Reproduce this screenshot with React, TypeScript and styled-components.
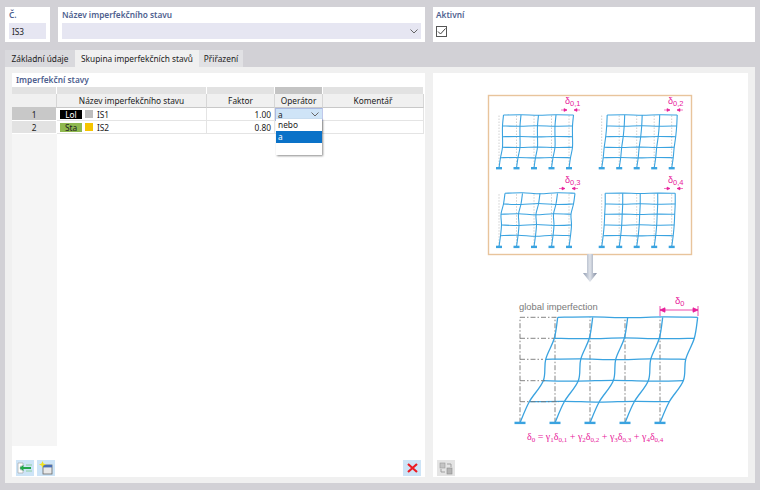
import React from "react";
import styled, { createGlobalStyle } from "styled-components";

const Global = createGlobalStyle`
  html, body { margin: 0; padding: 0; background: #d2d1d6; }
  body { font-family: "Noto Sans", "Liberation Sans", sans-serif; font-size: 8.3px; line-height: 11px; color: #222; }
`;

const Page = styled.div`
  width: 760px;
  height: 490px;
  box-sizing: border-box;
  padding: 7px 5px;
  display: flex;
  flex-direction: column;
  overflow: hidden;
`;

const TopRow = styled.div`
  display: flex;
  gap: 8px;
  height: 35px;
  margin-bottom: 8px;
`;

const Card = styled.div<{ $w?: number; $pad?: number }>`
  background: #fff;
  box-sizing: border-box;
  padding: 2px ${(p) => p.$pad ?? 4}px;
  width: ${(p) => (p.$w ? `${p.$w}px` : "auto")};
  flex: ${(p) => (p.$w ? "none" : "1")};
`;

const Label = styled.div`
  color: #4f5f8f;
  font-weight: 600;
  height: 14px;
  line-height: 11px;
`;

const Input = styled.div`
  height: 16px;
  background: #e6e6f2;
  display: flex;
  align-items: center;
  justify-content: space-between;
  padding: 0 3px 0 3px;
`;

const Checkbox = styled.div`
  width: 9px;
  height: 9px;
  border: 1px solid #555;
  margin-top: 3px;
  display: flex;
`;

const Tabs = styled.div`
  display: flex;
  height: 17px;
`;

const Tab = styled.div<{ $active?: boolean; $w: number; $bg?: string }>`
  width: ${(p) => p.$w}px;
  background: ${(p) => (p.$active ? "#f0f0f0" : p.$bg || "transparent")};
  display: flex;
  align-items: center;
  justify-content: center;
  color: #222;
`;

const Panel = styled.div`
  flex: 1;
  background: #f0f0f0;
  display: flex;
  gap: 8px;
  padding: 6px 7px 6px 7px;
  min-height: 0;
`;

const SidePane = styled.div<{ $w: number }>`
  width: ${(p) => p.$w}px;
  background: #fff;
  display: flex;
  flex-direction: column;
  position: relative;
`;

const Title = styled.div`
  height: 14px;
  line-height: 13px;
  padding-left: 4px;
  color: #4f5f8f;
  font-weight: 600;
`;

const COLS = "45px 150px 68px 48px 101px";

const Strip = styled.div`
  display: grid;
  grid-template-columns: ${COLS};
  height: 7px;
  & > div { background: #e2e2e2; margin-right: 1px; }
  & > div:nth-child(4) { background: #c4c4c4; }
`;

const HeadRow = styled.div`
  display: grid;
  grid-template-columns: ${COLS};
  height: 14px;
`;

const HeadCell = styled.div`
  background: #f0f0f0;
  border-right: 1px solid #d6d6d6;
  border-bottom: 1px solid #c8c8c8;
  display: flex;
  align-items: center;
  justify-content: center;
`;

const Row = styled.div`
  display: grid;
  grid-template-columns: ${COLS};
  height: 13px;
`;

const RowHead = styled.div<{ $sel?: boolean }>`
  background: ${(p) => (p.$sel ? "#c8c8c8" : "#e2e2e2")};
  border-bottom: 1px solid #fff;
  border-right: 1px solid #fff;
  display: flex;
  align-items: center;
  justify-content: center;
`;

const Cell = styled.div<{ $right?: boolean }>`
  border-right: 1px solid #e4e4e4;
  border-bottom: 1px solid #e4e4e4;
  display: flex;
  align-items: center;
  justify-content: ${(p) => (p.$right ? "flex-end" : "flex-start")};
  padding: 0 3px;
  box-sizing: border-box;
  gap: 3px;
  min-width: 0;
`;

const Badge = styled.span<{ $bg: string; $fg: string }>`
  width: 22px;
  height: 9px;
  background: ${(p) => p.$bg};
  color: ${(p) => p.$fg};
  display: flex;
  align-items: center;
  justify-content: center;
`;

const Swatch = styled.span<{ $c: string }>`
  width: 8px;
  height: 8px;
  background: ${(p) => p.$c};
  margin-right: 1px;
`;

const ComboCell = styled.div`
  background: #cfe4f7;
  border: 1px solid #aab8e2;
  border-right-color: #c0c8ea;
  box-sizing: border-box;
  display: flex;
  align-items: center;
  justify-content: space-between;
  padding: 0 3px 0 2px;
  position: relative;
  line-height: 10px;
`;

const DropList = styled.div`
  position: absolute;
  top: 10px;
  left: 0px;
  width: 46px;
  height: 36px;
  background: #fff;
  box-shadow: 1px 1px 2px rgba(0, 0, 0, 0.45);
  z-index: 3;
`;

const DropItem = styled.div<{ $sel?: boolean }>`
  height: 12px;
  line-height: 12px;
  padding-left: 2px;
  background: ${(p) => (p.$sel ? "#0a72c8" : "transparent")};
  color: ${(p) => (p.$sel ? "#fff" : "#222")};
`;

const Body = styled.div`
  flex: 1;
  display: grid;
  grid-template-columns: 45px 1fr;
  min-height: 0;
`;

const GutterCol = styled.div`
  background: #f5f5f5;
  height: 312px;
`;

const Footer = styled.div`
  position: absolute;
  left: 4px;
  right: 4px;
  bottom: 1px;
  display: flex;
  gap: 3px;
`;

const IconBtn = styled.div<{ $off?: boolean; $push?: boolean }>`
  width: 18px;
  height: 16px;
  background: ${(p) => (p.$off ? "#e4e4e4" : "#cde4f7")};
  display: flex;
  align-items: center;
  justify-content: center;
  margin-left: ${(p) => (p.$push ? "auto" : "0")};
`;

const Chevron = () => (
  <svg width="8" height="5" viewBox="0 0 8 5">
    <path d="M.5 .5 L4 4 L7.5 .5" fill="none" stroke="#666" strokeWidth="1" />
  </svg>
);

const PINK = "#e8209a";
const BLUE = "#3aa3e0";

// smooth line through the points (catmull-rom to bezier)
function smooth(pts: number[][]) {
  let d = `M${pts[0][0]} ${pts[0][1]}`;
  for (let i = 0; i < pts.length - 1; i++) {
    const a = pts[Math.max(i - 1, 0)];
    const b = pts[i];
    const c = pts[i + 1];
    const e = pts[Math.min(i + 2, pts.length - 1)];
    const c1 = [b[0] + (c[0] - a[0]) / 6, b[1] + (c[1] - a[1]) / 6];
    const c2 = [c[0] - (e[0] - b[0]) / 6, c[1] - (e[1] - b[1]) / 6];
    d += ` C${c1[0]} ${c1[1]} ${c2[0]} ${c2[1]} ${c[0]} ${c[1]}`;
  }
  return d;
}

function Frame({
  x,
  base,
  dx,
  floors,
  offs,
  w = 1.1,
  supportW = 6,
  wave = 0.2,
  dashed,
}: {
  x: number;
  base: number;
  dx: number;
  floors: number[];
  offs: number[];
  w?: number;
  supportW?: number;
  wave?: number;
  dashed: { color: string; w: number; dash: string };
}) {
  const cols = [0, 1, 2, 3, 4].map((i) => x + i * dx);
  const ys = [base, ...floors];
  const xs = [0, ...offs];
  return (
    <g fill="none">
      {cols.map((c) => (
        <line key={c} x1={c} x2={c} y1={base} y2={floors[floors.length - 1]} stroke={dashed.color} strokeWidth={dashed.w} strokeDasharray={dashed.dash} />
      ))}
      {cols.map((c) => (
        <path key={c} d={smooth(ys.map((y, i) => [c + xs[i], y]))} stroke={BLUE} strokeWidth={w} />
      ))}
      {floors.map((y, i) => (
        <path
          key={y}
          d={smooth(cols.map((c, k) => [c + offs[i], y + (k === 0 || k === 4 ? 0 : (k % 2 ? wave : -wave) * (i % 2 ? 1 : -1))]))}
          stroke={BLUE}
          strokeWidth={w}
        />
      ))}
      {cols.map((c) => (
        <rect key={c} x={c - supportW / 2} y={base - 1} width={supportW} height={2.4} fill={BLUE} />
      ))}
    </g>
  );
}

const smallDash = { color: "#c4c4c4", w: 0.8, dash: "1.5 1.5" };
const bigDash = { color: "#777", w: 0.9, dash: "5 2 1.5 2" };

const InwardDim = ({ x, y }: { x: number; y: number }) => (
  <g fill={PINK} stroke={PINK} strokeWidth="0.6">
    <line x1={x - 7} x2={x - 1} y1={y} y2={y} />
    <line x1={x + 6} x2={x + 12} y1={y} y2={y} />
    <path d={`M${x - 1} ${y} l-3 -1.4 v2.8z`} />
    <path d={`M${x + 6} ${y} l3 -1.4 v2.8z`} />
  </g>
);

const SmallLabel = ({ x, y, n }: { x: number; y: number; n: number }) => (
  <text x={x} y={y} fill={PINK} fontFamily="Liberation Sans, sans-serif" fontSize="9">
    δ<tspan fontSize="7.5" dy="2">0,{n}</tspan>
  </text>
);

const Sub = ({ t }: { t: string }) => (
  <tspan fontSize="7" dy="1.5">{t}</tspan>
);
const Up = ({ t }: { t: string }) => <tspan dy="-1.5">{t}</tspan>;

const Diagram = () => (
  <svg width="315" height="380" viewBox="433 73 315 380">
    <defs>
      <linearGradient id="arr" x1="0" x2="1" y1="0" y2="0">
        <stop offset="0" stopColor="#8f9bb0" />
        <stop offset="0.5" stopColor="#dfe3ea" />
        <stop offset="1" stopColor="#7d889e" />
      </linearGradient>
    </defs>
    <rect x="488.5" y="95.5" width="203" height="159" fill="#fff" stroke="#e8c49c" strokeWidth="1.4" />

    <Frame x={499} base={168} dx={17.5} floors={[157.7, 147.3, 136.7, 126, 115]} offs={[1.5, 3.5, 3.5, 3.5, 4.5]} dashed={smallDash} />
    <Frame x={601.7} base={168} dx={17.5} floors={[157.7, 147.3, 136.7, 126, 115]} offs={[1.5, 2.5, 4, 5, 5.5]} dashed={smallDash} />
    <Frame x={499} base={246.7} dx={17.5} floors={[235.7, 225, 214.3, 204, 193.3]} offs={[1.5, 2.5, 2, 4.5, 6]} wave={0.5} dashed={smallDash} />
    <Frame x={601.7} base={246.7} dx={17.5} floors={[235.7, 225, 214.3, 204, 193.3]} offs={[1.5, 2.5, 3, 3.5, 3.5]} dashed={smallDash} />

    <SmallLabel x={565} y={104} n={1} />
    <SmallLabel x={668} y={104} n={2} />
    <SmallLabel x={565} y={183} n={3} />
    <SmallLabel x={668} y={183} n={4} />
    <InwardDim x={568} y={110} />
    <InwardDim x={671} y={110} />
    <InwardDim x={566} y={188.5} />
    <InwardDim x={671} y={188.5} />

    <path d="M587 254 H593 V273 H597 L590 282 L583 273 H587 Z" fill="url(#arr)" />

    <text x="519" y="310" fill="#7a7a7a" fontFamily="Liberation Sans, sans-serif" fontSize="9.4">global imperfection</text>

    <Frame x={520} base={422.7} dx={35} floors={[401.7, 380.7, 359.3, 338.3, 317.3]} offs={[9.3, 23.3, 25.7, 34.3, 37.7]} w={1.3} supportW={11} wave={0.4} dashed={bigDash} />
    <g fill="none" stroke="#777" strokeWidth="0.9" strokeDasharray="5 2 1.5 2">
      <line x1="520" x2="559" y1="401.7" y2="401.7" />
      <line x1="520" x2="545" y1="380.7" y2="380.7" />
      <line x1="520" x2="543" y1="359.3" y2="359.3" />
      <line x1="520" x2="554" y1="338.3" y2="338.3" />
      <line x1="520" x2="557" y1="317.3" y2="317.3" />
    </g>

    <g stroke={PINK} strokeWidth="0.8" fill={PINK}>
      <line x1="660" x2="660" y1="306" y2="316" />
      <line x1="698" x2="698" y1="306" y2="316" />
      <line x1="660" x2="698" y1="310" y2="310" />
      <path d="M660 310 l5 -2.2 v4.4z" />
      <path d="M698 310 l-5 -2.2 v4.4z" />
    </g>
    <text x="675" y="304" fill={PINK} fontFamily="Liberation Sans, sans-serif" fontSize="9.5">
      δ<tspan fontSize="7.5" dy="2">0</tspan>
    </text>

    <text x="527" y="440" fill={PINK} fontFamily="Liberation Serif, serif" fontSize="10">
      δ<Sub t="0" /><Up t=" = γ" /><Sub t="1" /><Up t="δ" /><Sub t="0,1" /><Up t=" + γ" /><Sub t="2" /><Up t="δ" /><Sub t="0,2" /><Up t=" + γ" /><Sub t="3" /><Up t="δ" /><Sub t="0,3" /><Up t=" + γ" /><Sub t="4" /><Up t="δ" /><Sub t="0,4" />
    </text>
  </svg>
);

export default function App() {
  return (
    <Page>
      <Global />
      <TopRow>
        <Card $w={45}>
          <Label>Č.</Label>
          <Input>IS3</Input>
        </Card>
        <Card $w={367}>
          <Label>Název imperfekčního stavu</Label>
          <Input>
            <span />
            <Chevron />
          </Input>
        </Card>
        <Card $pad={3}>
          <Label>Aktivní</Label>
          <Checkbox>
            <svg width="9" height="9" viewBox="0 0 9 9">
              <path d="M1 4.5 L3.5 7 L8.5 1.5" fill="none" stroke="#444" strokeWidth="1" />
            </svg>
          </Checkbox>
        </Card>
      </TopRow>

      <Tabs>
        <Tab $w={70} $bg="#d9d9dd">Základní údaje</Tab>
        <Tab $w={124} $active>Skupina imperfekčních stavů</Tab>
        <Tab $w={44} $bg="#e1e1e4">Přiřazení</Tab>
      </Tabs>

      <Panel>
        <SidePane $w={413}>
          <Title>Imperfekční stavy</Title>
          <Strip>
            <div />
            <div />
            <div />
            <div />
            <div />
          </Strip>
          <HeadRow>
            <HeadCell />
            <HeadCell>Název imperfekčního stavu</HeadCell>
            <HeadCell>Faktor</HeadCell>
            <HeadCell>Operátor</HeadCell>
            <HeadCell>Komentář</HeadCell>
          </HeadRow>
          <Row>
            <RowHead $sel>1</RowHead>
            <Cell>
              <Badge $bg="#000" $fg="#fff">Lol</Badge>
              <Swatch $c="#bdbdbd" />
              IS1
            </Cell>
            <Cell $right>1.00</Cell>
            <ComboCell>
              a
              <Chevron />
              <DropList>
                <DropItem>nebo</DropItem>
                <DropItem $sel>a</DropItem>
              </DropList>
            </ComboCell>
            <Cell />
          </Row>
          <Row>
            <RowHead>2</RowHead>
            <Cell>
              <Badge $bg="#8fb84f" $fg="#222">Sta</Badge>
              <Swatch $c="#f5c400" />
              IS2
            </Cell>
            <Cell $right>0.80</Cell>
            <Cell />
            <Cell />
          </Row>
          <Body>
            <GutterCol />
            <div />
          </Body>
          <Footer>
            <IconBtn>
              <svg width="16" height="12" viewBox="0 0 16 12">
                <path d="M1 1 H6 V4 H3.5 V8 H6 V11 H1 Z" fill="#fff" stroke="#aaa" strokeWidth="0.7" />
                <path d="M2.5 6 L6.5 3 V5 H14 V7 H6.5 V9 Z" fill="#22a84a" />
                <line x1="9" x2="15" y1="3" y2="3" stroke="#8fd0a0" />
                <line x1="9" x2="15" y1="9" y2="9" stroke="#8fd0a0" />
              </svg>
            </IconBtn>
            <IconBtn>
              <svg width="14" height="14" viewBox="0 0 14 14">
                <rect x="4" y="4" width="9" height="9" fill="#e8e8e8" stroke="#666" strokeWidth="0.8" />
                <rect x="4" y="4" width="9" height="2.4" fill="#4a6fb5" />
                <path d="M3.5 0 L4.5 2.5 L7 3.5 L4.5 4.5 L3.5 7 L2.5 4.5 L0 3.5 L2.5 2.5 Z" fill="#f2e21e" />
              </svg>
            </IconBtn>
            <IconBtn $push>
              <svg width="11" height="10" viewBox="0 0 11 10">
                <path d="M1 1 L10 9 M10 1 L1 9" stroke="#ec1c24" strokeWidth="2.2" />
              </svg>
            </IconBtn>
          </Footer>
        </SidePane>
        <SidePane $w={315}>
          <Diagram />
          <Footer>
            <IconBtn $off>
              <svg width="14" height="13" viewBox="0 0 14 13">
                <rect x="1" y="1" width="5" height="5" fill="#c4c4c4" stroke="#999" strokeWidth="0.6" />
                <rect x="8" y="6" width="5" height="6" fill="#b4b4b4" stroke="#8c8c8c" strokeWidth="0.6" />
                <path d="M8 2 H12 V5 M6 10 H2 V7" fill="none" stroke="#999" strokeWidth="0.9" />
              </svg>
            </IconBtn>
          </Footer>
        </SidePane>
      </Panel>
    </Page>
  );
}
